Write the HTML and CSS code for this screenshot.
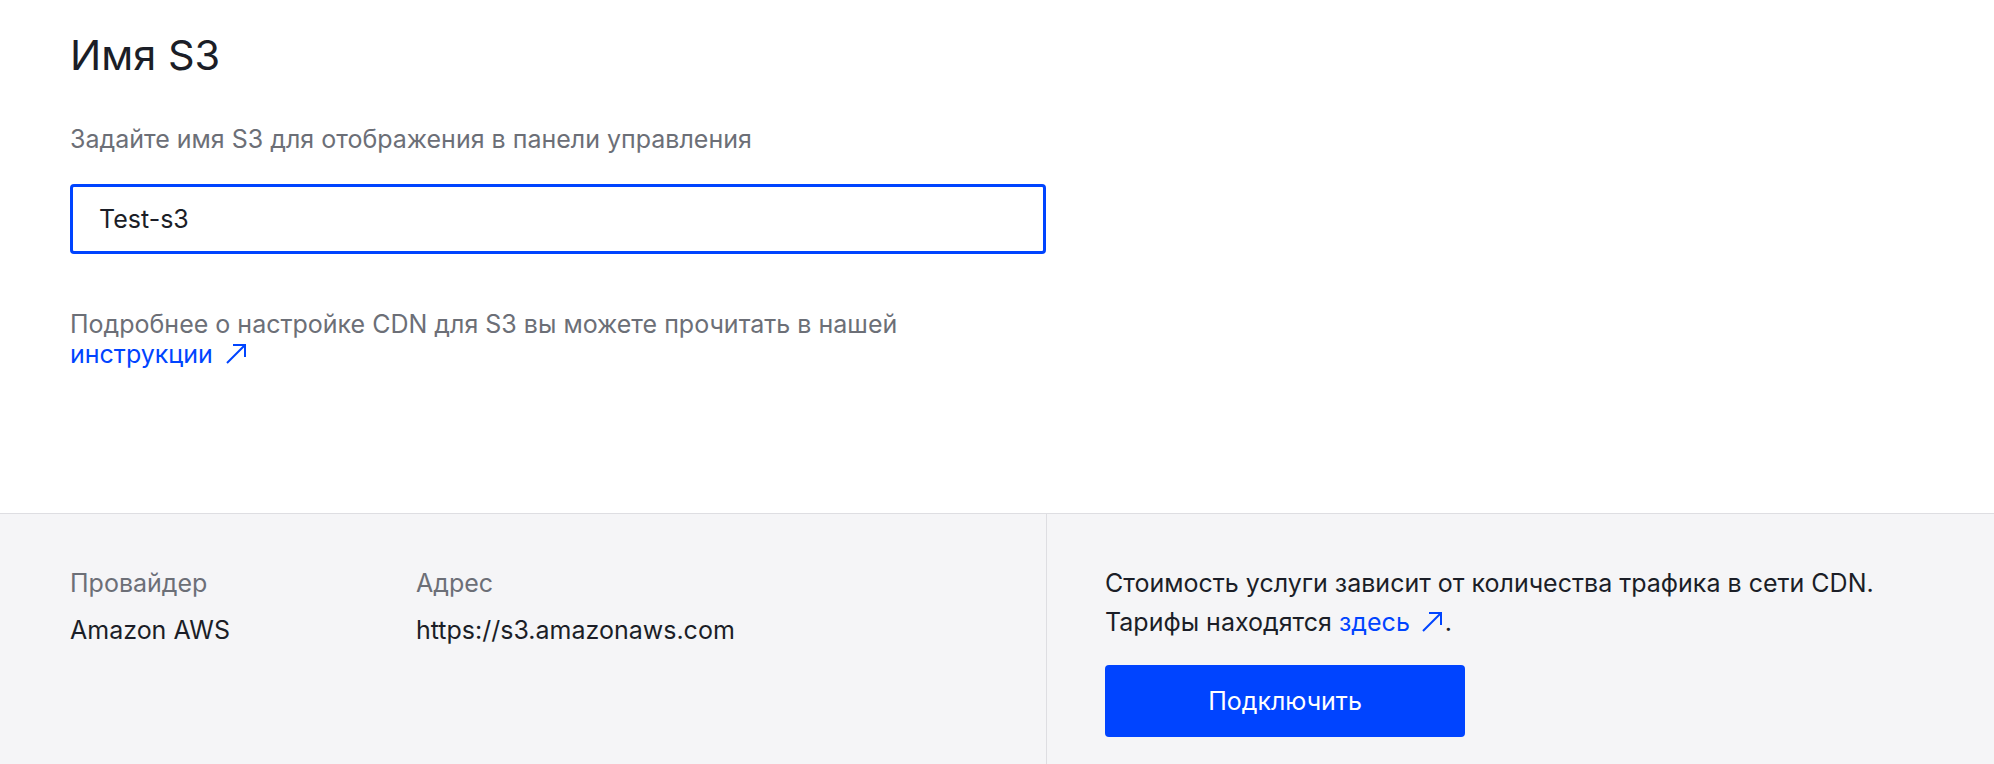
FILE: index.html
```html
<!DOCTYPE html>
<html lang="ru">
<head>
  <meta charset="UTF-8" />
  <meta name="viewport" content="width=device-width, initial-scale=1.0"/>
  <title>Имя S3</title>
  <link rel="stylesheet" href="styles.css">
</head>
<body>

<div class="page">
  <section class="settings">
    <h1 class="title">Имя S3</h1>
    <p class="hint">Задайте имя S3 для отображения в панели управления</p>
    <input class="name-input" type="text" value="Test-s3">
    <p class="help">
      Подробнее о настройке CDN для S3 вы можете прочитать в нашей<br>
      <a class="link" href="#">инструкции<svg class="arrow" viewBox="0 0 22 22"><path d="M2 20 L20 2 M8 2 H20 V14"/></svg></a>
    </p>
  </section>

  <section class="summary">
    <div class="summary-info">
      <div class="field provider">
        <div class="field-label">Провайдер</div>
        <div class="field-value">Amazon AWS</div>
      </div>
      <div class="field">
        <div class="field-label">Адрес</div>
        <div class="field-value">https://s3.amazonaws.com</div>
      </div>
    </div>
    <div class="summary-action">
      <p class="price">
        Стоимость услуги зависит от количества трафика в сети CDN.<br>
        Тарифы находятся <a class="link" href="#">здесь<svg class="arrow" viewBox="0 0 22 22"><path d="M2 20 L20 2 M8 2 H20 V14"/></svg></a>.
      </p>
      <button class="connect">Подключить</button>
    </div>
  </section>
</div>

</body>
</html>
```

FILE: styles.css
```css
* {
  box-sizing: border-box;
}
body {
  margin: 0;
  font-family: Inter, 'Noto Sans', sans-serif;
  color: #1b1e27;
  background: #fff;
}

.page {
  display: flex;
  flex-direction: column;
  height: 100vh;
}

.settings {
  padding: 31px 70px 0;
  height: 513px;
}

.title {
  margin: 0;
  font-size: 41.5px;
  line-height: 48px;
  font-weight: 400;
}

.hint {
  margin: 45px 0 0;
  font-size: 25px;
  line-height: 30px;
  color: #6c6f77;
}

.name-input {
  display: block;
  width: 976px;
  height: 70px;
  margin-top: 30px;
  padding: 0 26px;
  border: 3px solid #0044ff;
  border-radius: 4px;
  font-family: inherit;
  font-size: 25px;
  color: #1b1e27;
  outline: none;
}

.help {
  margin: 55px 0 0;
  font-size: 25px;
  line-height: 30px;
  color: #6c6f77;
}

.link {
  color: #0044ff;
  text-decoration: none;
}

.arrow {
  width: 22px;
  height: 22px;
  margin-left: 12px;
  vertical-align: -2px;
  fill: none;
  stroke: #0044ff;
  stroke-width: 2;
}

.summary {
  flex: 1;
  display: grid;
  grid-template-columns: 1047px 1fr;
  background: #f5f5f7;
  border-top: 1px solid #dedee2;
}

.summary-info {
  display: flex;
  padding: 53px 70px 0;
  border-right: 1px solid #dedee2;
}

.field {
  font-size: 25px;
}

.provider {
  width: 346px;
}

.field-label {
  line-height: 32px;
  color: #6c6f77;
}

.field-value {
  margin-top: 15px;
  line-height: 32px;
}

.summary-action {
  padding: 50px 58px 0;
}

.price {
  margin: 0;
  font-size: 25px;
  line-height: 39px;
}

.price .arrow {
  margin-left: 11px;
  margin-right: 2px;
}

.connect {
  margin-top: 23px;
  width: 360px;
  height: 72px;
  border: none;
  border-radius: 4px;
  background: #0044ff;
  color: #fff;
  font-family: inherit;
  font-size: 25px;
  cursor: pointer;
}
```
